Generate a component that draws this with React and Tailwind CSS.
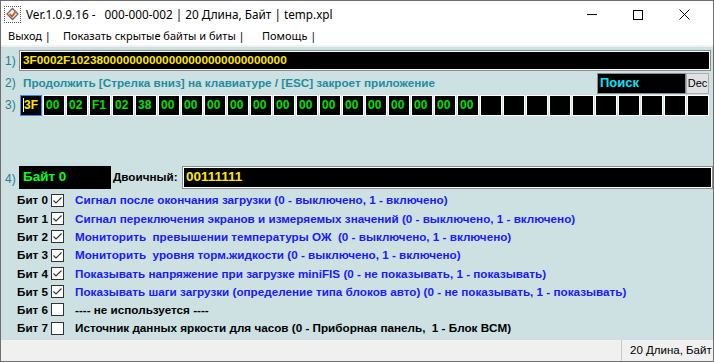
import React from "react";

const bytes = ["3F","00","02","F1","02","38","00","00","00","00","00","00","00","00","00","00","00","00","00","00"];
const cells = [...bytes, ...Array(10).fill("")];

const bits = [
  { n: 0, on: true, blue: true, t: "Сигнал после окончания загрузки (0 - выключено, 1 - включено)" },
  { n: 1, on: true, blue: true, t: "Сигнал переключения экранов и измеряемых значений (0 - выключено, 1 - включено)" },
  { n: 2, on: true, blue: true, t: "Мониторить  превышении температуры ОЖ  (0 - выключено, 1 - включено)" },
  { n: 3, on: true, blue: true, t: "Мониторить  уровня торм.жидкости (0 - выключено, 1 - включено)" },
  { n: 4, on: true, blue: true, t: "Показывать напряжение при загрузке miniFIS (0 - не показывать, 1 - показывать)" },
  { n: 5, on: true, blue: true, t: "Показывать шаги загрузки (определение типа блоков авто) (0 - не показывать, 1 - показывать)" },
  { n: 6, on: false, blue: false, t: "---- не используется ----" },
  { n: 7, on: false, blue: false, t: "Источник данных яркости для часов (0 - Приборная панель,  1 - Блок BCM)" },
];

function Check({ on }) {
  return (
    <div className="w-[13px] h-[13px] bg-white border border-[#333] flex items-center justify-center shrink-0">
      {on && (
        <svg width="11" height="11" viewBox="0 0 11 11">
          <path d="M1.5 5.5 L4 8 L9.5 2.5" fill="none" stroke="#333" strokeWidth="1.1" />
        </svg>
      )}
    </div>
  );
}

export default function App() {
  return (
    <div className="w-[714px] h-[362px] border border-[#6f6f6f] bg-white flex flex-col overflow-hidden" style={{ fontFamily: "'Liberation Sans', Arial, sans-serif" }}>
      {/* title bar */}
      <div className="h-[27px] flex items-center shrink-0" style={{ fontFamily: "'Noto Sans', 'Open Sans', sans-serif" }}>
        <div className="ml-[3px] w-[17px] h-[17px] border border-dotted border-[#555] flex items-center justify-center">
          <svg width="15" height="15" viewBox="0 0 15 15">
            <path d="M7.5 1.5 L13 7 L7.5 12.5 L2 7 Z" fill="#f4f4f4" stroke="#6a6a6a" strokeWidth="1.3" />
            <path d="M4.5 7 L7 9.5 L11 4" fill="none" stroke="#e05a1a" strokeWidth="1.8" />
          </svg>
        </div>
        <div className="ml-[5px] text-[11.75px] text-black whitespace-pre">Ver.1.0.9.16 -   000-000-002 | 20 Длина, Байт | temp.xpl</div>
        <div className="ml-auto flex items-center h-full">
          <div className="w-[46px] h-full flex items-center justify-center">
            <div className="w-[10px] h-[1px] bg-black" />
          </div>
          <div className="w-[46px] h-full flex items-center justify-center">
            <div className="w-[10px] h-[10px] border border-black" />
          </div>
          <div className="w-[46px] h-full flex items-center justify-center">
            <svg width="11" height="11" viewBox="0 0 11 11">
              <path d="M0.5 0.5 L10.5 10.5 M10.5 0.5 L0.5 10.5" stroke="#000" strokeWidth="1" />
            </svg>
          </div>
          <div className="w-[6px]" />
        </div>
      </div>
      {/* menu */}
      <div className="h-[17px] flex items-center text-[11px] text-black shrink-0 whitespace-pre" style={{ fontFamily: "'Noto Sans', 'Open Sans', sans-serif" }}>
        <span className="ml-[7px] w-[55px]">Выход |</span>
        <span className="w-[199px]">Показать скрытые байты и биты |</span>
        <span>Помощь |</span>
      </div>
      <div className="h-[2px] bg-[#f0f0f0] shrink-0" />
      {/* client */}
      <div className="flex-1 bg-[#cde0e2] flex flex-col text-[11.7px] font-bold">
        {/* row 1 */}
        <div className="flex items-center mt-[3px] h-[21px]">
          <span className="w-[18px] pl-[4px] text-[#2a7f8c] font-normal text-[12px]">1)</span>
          <div className="w-[692px] h-[21px] border border-[#8c8c8c]">
            <div className="w-full h-full bg-black border border-white flex items-center pl-[2px] text-[#ffe600] text-[11.8px]">
              3F0002F102380000000000000000000000000000
            </div>
          </div>
        </div>
        {/* row 2 */}
        <div className="flex items-center h-[22px] mt-[1px]">
          <span className="w-[22px] pl-[4px] text-[#2a7f8c] font-normal text-[12px]">2)</span>
          <span className="text-[#1d8e9c]">Продолжить [Стрелка вниз] на клавиатуре / [ESC] закроет приложение</span>
          <div className="ml-auto flex items-center mr-[4px]">
            <div className="w-[89px] h-[21px] bg-black border border-[#8c8c8c] flex items-center pl-[2px] text-[#00e5ff] text-[13px]">Поиск</div>
            <div className="w-[23px] h-[21px] bg-[#e1e1e1] border border-[#adadad] flex items-center justify-center text-black font-normal text-[11px]">Dec</div>
          </div>
        </div>
        {/* row 3 */}
        <div className="flex items-center h-[22px]">
          <span className="w-[19px] pl-[4px] text-[#2a7f8c] font-normal text-[12px]">3)</span>
          <div className="flex gap-[1px]">
            {cells.map((c, i) => (
              <div
                key={i}
                className={
                  "w-[22px] h-[21px] bg-black border flex items-center pl-[2px] text-[12px] " +
                  (i === 0 ? "border-[#3f88e0] text-[#ffe600]" : "border-white text-[#00e000]")
                }
              >
                {i === 0 && <span className="w-[1px] h-[14px] bg-white" />}
                {c}
              </div>
            ))}
          </div>
        </div>
        {/* row 4 */}
        <div className="flex items-center h-[24px] mt-[49px]">
          <span className="w-[18px] pl-[4px] text-[#2a7f8c] font-normal text-[12px] mt-[4px]">4)</span>
          <div className="w-[92px] h-[23px] bg-black flex items-center pl-[4px] text-[#00ff20] text-[13.5px]">Байт 0</div>
          <span className="ml-[2px] text-black">Двоичный:</span>
          <div className="ml-auto w-[531px] h-[23px] border border-[#8c8c8c]">
            <div className="w-full h-full bg-black border border-white flex items-center pl-[2px] text-[#ffe600] text-[13.5px]">00111111</div>
          </div>
        </div>
        {/* bits */}
        <div className="flex flex-col mt-[2px]">
          {bits.map((b) => (
            <div key={b.n} className="flex items-center h-[18.3px]">
              <span className="ml-[16px] w-[34px] text-black whitespace-nowrap">Бит {b.n}</span>
              <Check on={b.on} />
              <span className={"ml-[11px] whitespace-pre " + (b.blue ? "text-[#1a1aff]" : "text-black")}>{b.t}</span>
            </div>
          ))}
        </div>
      </div>
      {/* status */}
      <div className="h-[22px] bg-[#f0f0f0] border-t border-[#dadada] flex items-center shrink-0">
        <div className="ml-auto h-full border-l border-[#c8c8c8] flex items-center pl-[8px] text-[11.5px] text-black w-[92px] whitespace-nowrap">20 Длина, Байт</div>
      </div>
    </div>
  );
}
